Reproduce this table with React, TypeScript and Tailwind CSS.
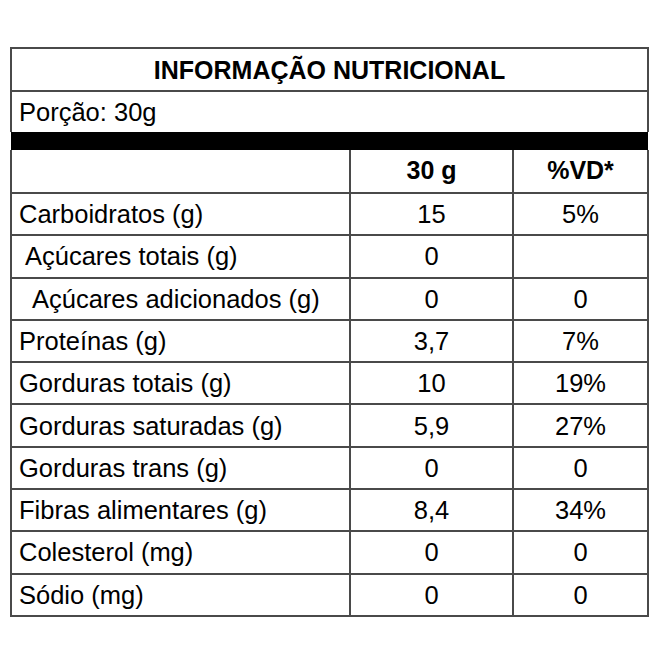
const rows: { label: string; indent: string; qty: string; vd: string }[] = [
  { label: "Carboidratos (g)", indent: "pl-[7px]", qty: "15", vd: "5%" },
  { label: "Açúcares totais (g)", indent: "pl-[13px]", qty: "0", vd: "" },
  { label: "Açúcares adicionados (g)", indent: "pl-[20px]", qty: "0", vd: "0" },
  { label: "Proteínas (g)", indent: "pl-[7px]", qty: "3,7", vd: "7%" },
  { label: "Gorduras totais (g)", indent: "pl-[7px]", qty: "10", vd: "19%" },
  { label: "Gorduras saturadas (g)", indent: "pl-[7px]", qty: "5,9", vd: "27%" },
  { label: "Gorduras trans (g)", indent: "pl-[7px]", qty: "0", vd: "0" },
  { label: "Fibras alimentares (g)", indent: "pl-[7px]", qty: "8,4", vd: "34%" },
  { label: "Colesterol (mg)", indent: "pl-[7px]", qty: "0", vd: "0" },
  { label: "Sódio (mg)", indent: "pl-[7px]", qty: "0", vd: "0" },
];

export default function App() {
  return (
    <div className="w-[660px] h-[660px] bg-white pt-[47px] pl-[10px] font-['Liberation_Sans',Arial,sans-serif] text-black">
      <table className="border-collapse w-[637px] table-fixed">
        <colgroup>
          <col className="w-[339px]" />
          <col className="w-[163px]" />
          <col className="w-[135px]" />
        </colgroup>
        <tbody>
          {/* Title */}
          <tr className="h-[43px]">
            <td colSpan={3} className="border-2 border-[#4a4a4a] text-center font-bold text-[25px] pt-[2px]">
              INFORMAÇÃO NUTRICIONAL
            </td>
          </tr>
          <tr className="h-[41px]">
            <td colSpan={3} className="border-2 border-[#4a4a4a] border-b-0 pl-[7px] text-[25.5px]">
              Porção: 30g
            </td>
          </tr>
          <tr className="h-[18px]">
            <td colSpan={3} className="bg-black p-0" />
          </tr>

          {/* Header */}
          <tr className="h-[43px]">
            <td className="border-2 border-[#4a4a4a] border-t-0" />
            <td className="border-2 border-[#4a4a4a] border-t-0 text-center font-bold text-[25px]">30 g</td>
            <td className="border-2 border-[#4a4a4a] border-t-0 text-center font-bold text-[25px]">%VD*</td>
          </tr>

          {rows.map((r) => (
            <tr key={r.label} className="h-[42.3px]">
              <td className={`border-2 border-[#4a4a4a] text-[25.5px] ${r.indent}`}>{r.label}</td>
              <td className="border-2 border-[#4a4a4a] text-center text-[25.5px]">{r.qty}</td>
              <td className="border-2 border-[#4a4a4a] text-center text-[25.5px]">{r.vd}</td>
            </tr>
          ))}
        </tbody>
      </table>
    </div>
  );
}
